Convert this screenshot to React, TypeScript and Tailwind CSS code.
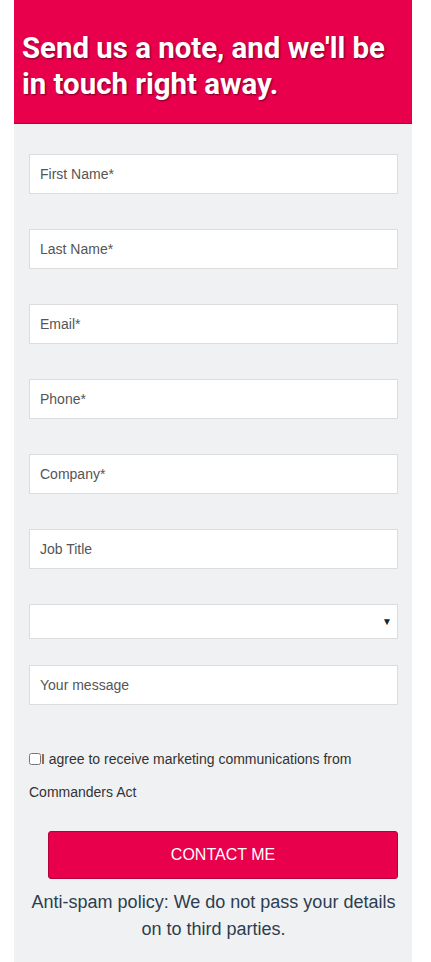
import { useState } from "react"

const fields = ["First Name*", "Last Name*", "Email*", "Phone*", "Company*", "Job Title"]

export default function App() {
    const [agree, setAgree] = useState(false)

    return (
        <div className="min-h-[962px] bg-white pl-[14px] pr-[19px]" style={{ fontFamily: '"Liberation Sans", Arial, sans-serif' }}>
            {/* header */}
            <div className="bg-[#e8004c] h-[124px] pt-[30px] pl-[8px] pr-[10px] border-b border-[#b8003c]">
                <h1
                    className="text-white text-[29.4px] font-bold leading-[36px] [text-shadow:1px_1px_2px_rgba(0,0,0,0.5)]"
                    style={{ fontFamily: 'Roboto, "Liberation Sans", sans-serif' }}
                >
                    Send us a note, and we'll be in touch right away.
                </h1>
            </div>

            {/* form */}
            <div className="bg-[#f0f1f3] pt-[30px] pl-[15px] pr-[14px] pb-[20px] min-h-[838px]">
                <div className="flex flex-col gap-[35px]">
                    {fields.map((f) => (
                        <input
                            key={f}
                            placeholder={f}
                            className="h-[40px] w-full bg-white border border-[#dcdcdc] px-[10px] text-[14px] text-[#555] placeholder:text-[#555] outline-none"
                        />
                    ))}
                </div>

                <div className="relative mt-[35px]">
                    <select className="h-[35px] w-full appearance-none bg-white border border-[#dcdcdc] px-[10px] text-[14px] outline-none">
                        <option></option>
                    </select>
                    <span className="absolute right-[6px] top-[10px] text-[10px] text-[#1a2233] pointer-events-none">▼</span>
                </div>

                <textarea
                    placeholder="Your message"
                    className="mt-[26px] block h-[40px] w-full resize-none bg-white border border-[#dcdcdc] px-[10px] pt-[10px] text-[14px] leading-[18px] text-[#555] placeholder:text-[#555] outline-none"
                />

                <label className="mt-[38px] block text-[14px] leading-[33px] text-[#333]">
                    <input
                        type="checkbox"
                        checked={agree}
                        onChange={(e) => setAgree(e.target.checked)}
                        className="m-0 mr-0 h-[12px] w-[12px] align-[-1px] accent-[#999]"
                    />
                    I agree to receive marketing communications from
                    <br />
                    Commanders Act
                </label>

                <div className="mt-[22px] pl-[19px]">
                    <button className="h-[48px] w-full rounded-[3px] bg-[#e8004c] border border-[#b5003b] text-white text-[16px]">
                        CONTACT ME
                    </button>
                </div>

                <p className="mt-[10px] text-center text-[18px] leading-[27px] text-[#2c3e50]">
                    Anti-spam policy: We do not pass your details on to third parties.
                </p>
            </div>
        </div>
    )
}
